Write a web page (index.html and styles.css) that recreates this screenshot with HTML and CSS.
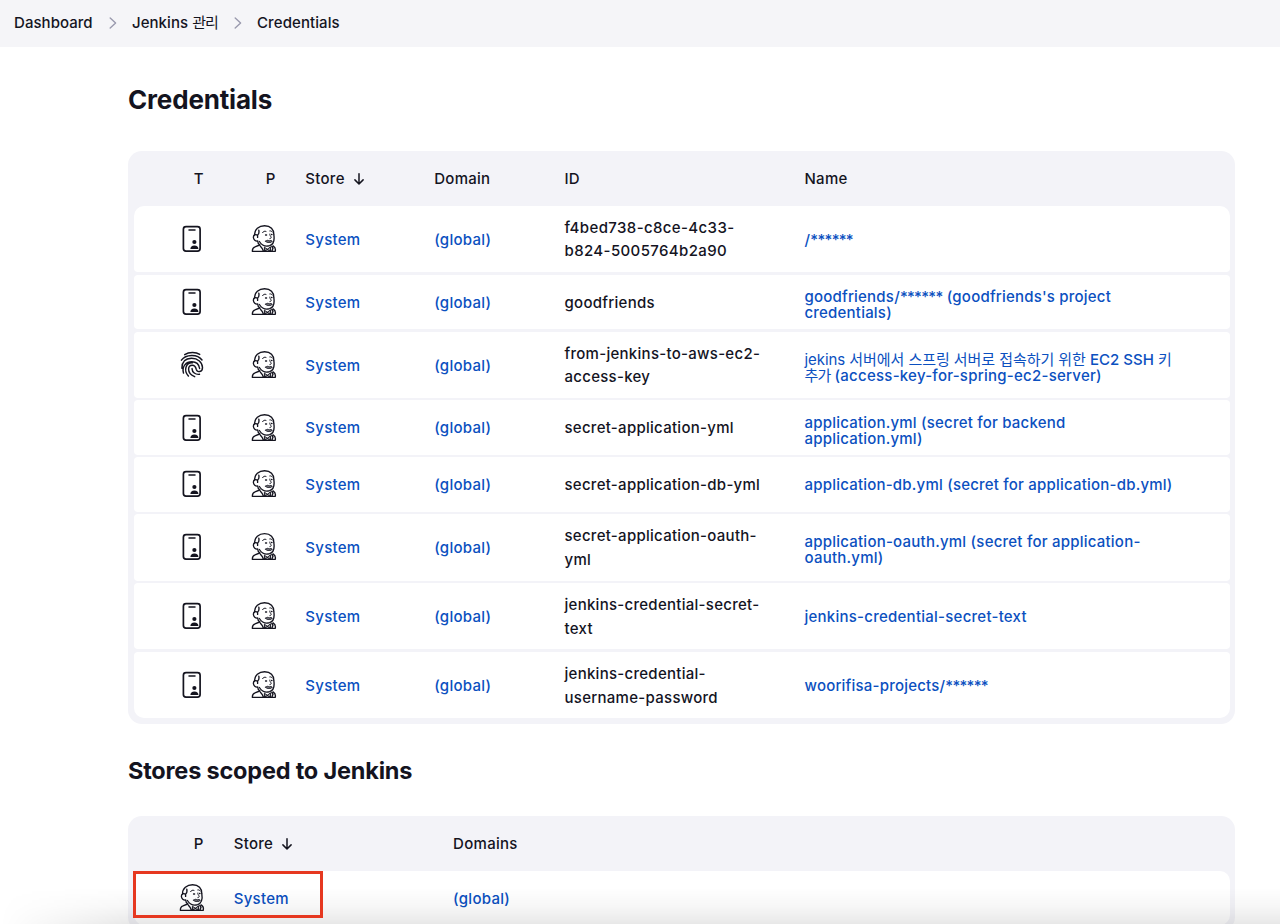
FILE: index.html
```html
<!DOCTYPE html>
<html lang="ko">
<head>
<meta charset="utf-8">
<title>Credentials</title>
<link rel="stylesheet" href="styles.css">
</head>
<body>
<svg class="defs" width="0" height="0">
  <symbol id="card" viewBox="0 0 20 28">
    <rect x="1.4" y="1.7" width="16.7" height="24.4" rx="2.6" fill="none" stroke="currentColor" stroke-width="1.7"/>
    <path d="M7 5h6" stroke="currentColor" stroke-width="1.5" stroke-linecap="round"/>
    <circle cx="12.4" cy="17" r="2.1" fill="currentColor"/>
    <path d="M8.4 24c0-2.3 1.4-3.5 4-3.5s4 1.2 4 3.5z" fill="currentColor"/>
  </symbol>
  <symbol id="finger" viewBox="0 0 24 28" fill="none" stroke="currentColor" stroke-width="1.45" stroke-linecap="round">
    <path d="M4.7 3.7C9 .8 16 .9 19.7 3.4M1.4 9.2C5.7 3.2 17.3 2.5 22 9M1.9 17.2C2 10.5 5.2 7.4 11.5 7.3c6.5 0 10.8 4 11 9.2.1 4.8-5.4 5.4-6.3 1.7-.5-2.3-1.2-4-3.9-4-2.1 0-3.7 1.6-3.7 4 0 3.1 2.1 5.8 6.1 7.5M3.5 22.1C1.6 15.2 6.2 10.8 11.8 10.8c5 0 7.3 3.3 7.8 6.7M8.4 25.1c-5-5.7-2.7-13.4 3.8-13.2M12 17.6c.2 3.7 3.3 6.2 7.5 5.7"/>
  </symbol>
  <symbol id="jenkins" viewBox="0 0 26 30" fill="none" stroke="currentColor" stroke-width="1.35" stroke-linecap="round" stroke-linejoin="round">
    <path d="M3.6 11C3.2 5.6 8 1.7 13.6 1.7c6 0 9.4 3.7 9.2 9 .9 5.5-.2 9.6-4.2 11-3.8 1.2-7.9-.6-10.2-4.2"/>
    <path d="M6.6 11.4c-2-1.6-4.4-.4-4.2 2.1.2 2.4 2 3.9 4.3 3.5M6.6 11.4v2M6.8 10.8c1.6-1.2 1.3-3 1-4.6M6.7 17c0 2 .8 3.2 2.3 4"/>
    <path d="M11.6 8.6c.8-1.3 2-1.8 3.4-1.2M18.8 6.9c1-.2 1.7.1 2.3 1M18.8 10c-.3 1.4.9 2 1.3 3.1.3.9-.3 1.4-1.2 1.5" stroke-width="1"/>
    <path d="M14.6 10.9h.9M20.6 10.6h.3" stroke-width="1.5"/>
    <path d="M14.6 17.2c1.5-1.4 2.7-1 3.6-.3 1.1-.7 2.2-.5 3.1.2-.8 1.3-1.8 1.6-3.1 1.3-1.4.3-2.6 0-3.6-1.2z" fill="currentColor" fill-opacity=".6" stroke-width=".9"/>
    <path d="M8.6 21 4 22.8C2 23.5 1.2 25 1.4 27.4h22.8c.6-2.3.1-4.2-2.1-5.5M9.4 22.2c1.3 1.3 2.4 2.8 3 4.8M20.8 22.4l1.2 1.9-1.2 3"/>
    <path d="M13.4 23.6v3.6l2.9-1.5zM19.6 23.2v4l-3.3-1.5z" fill="currentColor" fill-opacity=".45" stroke-width="1"/>
  </symbol>
  <symbol id="down" viewBox="0 0 12 14">
    <path d="M6 1.8v10M1.9 7.9 6 12l4.1-4.1" fill="none" stroke="currentColor" stroke-width="1.5" stroke-linecap="round" stroke-linejoin="round"/>
  </symbol>
  <symbol id="chev" viewBox="0 0 8 12">
    <path d="M1.2 1 6.6 6l-5.4 5" fill="none" stroke="currentColor" stroke-width="1.4" stroke-linecap="round" stroke-linejoin="round"/>
  </symbol>
</svg>
<nav class="crumbs">
  <span class="crumb c1">Dashboard</span><svg class="chev"><use href="#chev"/></svg>
  <span class="crumb c2">Jenkins <span class="hangul">관리</span></span><svg class="chev"><use href="#chev"/></svg>
  <span class="crumb c3">Credentials</span>
</nav>
<main>
  <h1>Credentials</h1>
  <section class="table">
    <div class="head cols">
      <span class="pad">T</span><span class="pad">P</span><span>Store<svg class="down"><use href="#down"/></svg></span><span>Domain</span><span>ID</span><span>Name</span>
    </div>
    <div class="rows">
      <div class="row cols"><svg class="card"><use href="#card"/></svg><svg class="jenkins"><use href="#jenkins"/></svg><a>System</a><a>(global)</a><span class="id hash">f4bed738-c8ce-4c33-<br>b824-5005764b2a90</span><a>/<span class="stars">******</span></a></div>
      <div class="row short cols"><svg class="card"><use href="#card"/></svg><svg class="jenkins"><use href="#jenkins"/></svg><a>System</a><a>(global)</a><span class="id">goodfriends</span><a class="name two">goodfriends/<span class="stars">******</span> (goodfriends's project<br>credentials)</a></div>
      <div class="row cols"><svg class="finger"><use href="#finger"/></svg><svg class="jenkins"><use href="#jenkins"/></svg><a>System</a><a>(global)</a><span class="id">from-jenkins-to-aws-ec2-<br>access-key</span><a class="name two wide"><span class="ko">jekins 서버에서 스프링 서버로 접속하기 위한</span> <span class="tail">EC2 SSH <span class="ko">키</span></span><br><span class="hangul">추가</span> (access-key-for-spring-ec2-server)</a></div>
      <div class="row short cols"><svg class="card"><use href="#card"/></svg><svg class="jenkins"><use href="#jenkins"/></svg><a>System</a><a>(global)</a><span class="id">secret-application-yml</span><a class="name two">application.yml (secret for backend<br>application.yml)</a></div>
      <div class="row short cols"><svg class="card"><use href="#card"/></svg><svg class="jenkins"><use href="#jenkins"/></svg><a>System</a><a>(global)</a><span class="id">secret-application-db-yml</span><a class="name">application-db.yml (secret for application-db.yml)</a></div>
      <div class="row cols"><svg class="card"><use href="#card"/></svg><svg class="jenkins"><use href="#jenkins"/></svg><a>System</a><a>(global)</a><span class="id">secret-application-oauth-<br>yml</span><a class="name two oauth">application-oauth.yml (secret for application-<br>oauth.yml)</a></div>
      <div class="row cols"><svg class="card"><use href="#card"/></svg><svg class="jenkins"><use href="#jenkins"/></svg><a>System</a><a>(global)</a><span class="id">jenkins-credential-secret-<br>text</span><a class="name wide">jenkins-credential-secret-text</a></div>
      <div class="row cols"><svg class="card"><use href="#card"/></svg><svg class="jenkins"><use href="#jenkins"/></svg><a>System</a><a>(global)</a><span class="id">jenkins-credential-<br>username-password</span><a class="name">woorifisa-projects/<span class="stars">******</span></a></div>
    </div>
  </section>
  <h2>Stores scoped to Jenkins</h2>
  <section class="table">
    <div class="head cols stores">
      <span class="pad">P</span><span>Store<svg class="down"><use href="#down"/></svg></span><span>Domains</span>
    </div>
    <div class="rows">
      <div class="row short cols stores"><svg class="jenkins"><use href="#jenkins"/></svg><a>System</a><a>(global)</a></div>
    </div>
  </section>
</main>
<div class="shade"></div>
<div class="mark"></div>
</body>
</html>
```
FILE: styles.css
```css
* { box-sizing: border-box; }
body {
  margin: 0;
  height: 924px;
  overflow: hidden;
  position: relative;
  background: #fff;
  color: #14141f;
  font: 500 15px/16px Inter, "Noto Sans CJK KR", sans-serif;
  letter-spacing: 0.28px;
}
.defs { position: absolute; }
svg { display: block; flex: none; }
.crumbs {
  display: flex;
  align-items: center;
  height: 47px;
  padding: 0 0 2px 14px;
  background: #f5f5f8;
  letter-spacing: 0.05px;
  white-space: nowrap;
}
.c1 { width: 94.5px; }
.c2 { width: 101.5px; margin-left: 15.5px; }
.c3 { margin-left: 15.5px; letter-spacing: 0.1px; }
.hangul { font-weight: 400; letter-spacing: -0.9px; }
.chev { width: 8px; height: 12px; color: #9a9aae; }
main { padding: 0 44.8px 0 128px; }
h1, h2 { margin: 0; font-weight: 700; color: #14141f; white-space: nowrap; }
h1 { padding: 34.7px 0 33.1px; font-size: 26px; line-height: 36px; letter-spacing: -0.17px; }
h2 { padding: 32.2px 0 30.1px; font-size: 23.5px; line-height: 30px; letter-spacing: -0.2px; }
.table {
  padding: 0 5.5px 5.5px;
  border-radius: 14px;
  background: #f3f3f8;
}
.cols {
  display: grid;
  grid-template-columns: 72px 55.3px 128.9px 130.3px 240px 1fr;
  align-items: center;
  padding-left: 44.5px;
  white-space: nowrap;
}
.stores { grid-template-columns: 55.7px 219.4px 1fr; }
.head { height: 55px; }
.head > span { display: flex; align-items: center; padding-top: 1px; }
.head > .pad { padding-left: 15.8px; }
.down { width: 12px; height: 14px; margin-left: 8px; }
.rows { display: grid; gap: 2.6px; }
.row { height: 66.3px; border-radius: 4px; background: #fff; }
.row.short { height: 54.3px; }
.row:first-child { border-top-left-radius: 10px; border-top-right-radius: 10px; }
.row:last-child { border-bottom-left-radius: 10px; border-bottom-right-radius: 10px; }
.row a { padding-top: 1.6px; color: #0b50c0; }
.row .name { letter-spacing: 0.21px; }
.row .wide { letter-spacing: 0.25px; }
.row .two { padding-top: 6.4px; }
.row .oauth { padding-top: 5px; letter-spacing: 0.23px; }
.id { line-height: 23.5px; padding-top: 1px; }
.hash { letter-spacing: 0.38px; }
.stars { letter-spacing: -0.7px; }
.card { width: 20px; height: 28px; margin-left: 4px; }
.finger { width: 24px; height: 28px; margin-left: 2px; }
.jenkins { width: 26px; height: 30px; margin-left: 1px; }
.ko { font-weight: 400; letter-spacing: -0.06px; }
.tail { letter-spacing: 0; }
.shade {
  position: absolute;
  left: 0;
  right: 0;
  bottom: 0;
  height: 36px;
  background: linear-gradient(rgba(0,0,0,0), rgba(0,0,0,.03) 50%, rgba(0,0,0,.09));
  -webkit-mask-image: linear-gradient(90deg, transparent, #000 130px);
  mask-image: linear-gradient(90deg, transparent, #000 130px);
}
.mark {
  position: absolute;
  left: 132.5px;
  top: 871px;
  width: 190.5px;
  height: 47px;
  border: 3px solid #e63820;
}
```
